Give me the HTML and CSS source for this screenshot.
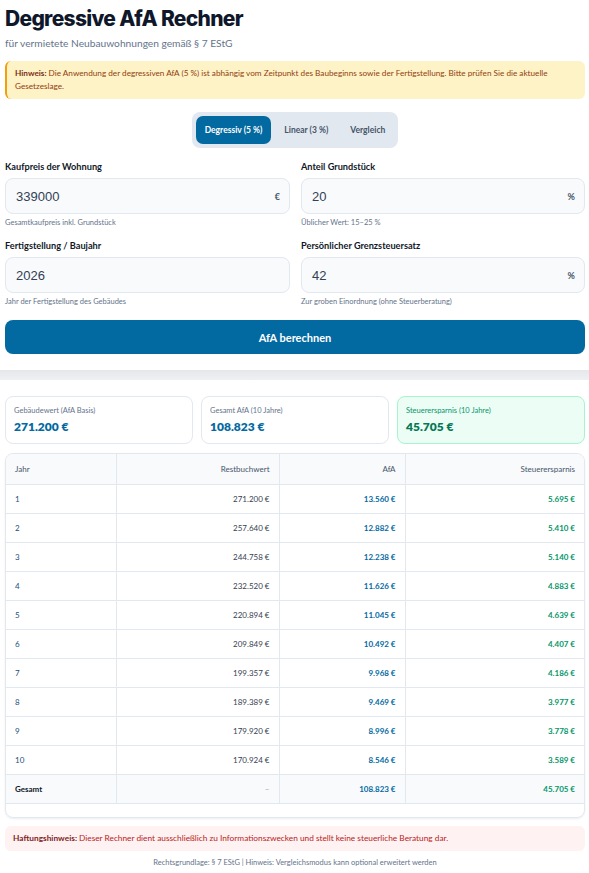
FILE: index.html
```html
<!DOCTYPE html>
<html lang="de">
<head>
<meta charset="utf-8">
<title>Degressive AfA Rechner</title>
<link rel="stylesheet" href="styles.css">
</head>
<body>
<main class="page">
  <section class="top">
    <h1 class="title">Degressive AfA Rechner</h1>
    <p class="subtitle">für vermietete Neubauwohnungen gemäß § 7 EStG</p>
    <div class="notice"><strong>Hinweis: </strong><span>Die Anwendung der degressiven AfA (5 %) ist abhängig vom Zeitpunkt des Baubeginns sowie der Fertigstellung. Bitte prüfen Sie die aktuelle Gesetzeslage.</span></div>
    <div class="tabs-row">
      <div class="tabs">
        <span class="tab active">Degressiv (5 %)</span>
        <span class="tab">Linear (3 %)</span>
        <span class="tab">Vergleich</span>
      </div>
    </div>
    <div class="form">
      <div class="field">
        <div class="label">Kaufpreis der Wohnung</div>
        <div class="input"><span class="value">339000</span><span class="unit">€</span></div>
        <div class="help">Gesamtkaufpreis inkl. Grundstück</div>
      </div>
      <div class="field">
        <div class="label">Anteil Grundstück</div>
        <div class="input"><span class="value">20</span><span class="unit">%</span></div>
        <div class="help">Üblicher Wert: 15–25 %</div>
      </div>
      <div class="field">
        <div class="label">Fertigstellung / Baujahr</div>
        <div class="input"><span class="value">2026</span></div>
        <div class="help">Jahr der Fertigstellung des Gebäudes</div>
      </div>
      <div class="field">
        <div class="label">Persönlicher Grenzsteuersatz</div>
        <div class="input"><span class="value">42</span><span class="unit">%</span></div>
        <div class="help">Zur groben Einordnung (ohne Steuerberatung)</div>
      </div>
    </div>
    <button class="calc">AfA berechnen</button>
  </section>
  <div class="band"></div>
  <section class="results">
    <div class="cards">
      <div class="card"><div class="card-label">Gebäudewert (AfA Basis)</div><div class="card-value">271.200 €</div></div>
      <div class="card"><div class="card-label">Gesamt AfA (10 Jahre)</div><div class="card-value">108.823 €</div></div>
      <div class="card green"><div class="card-label">Steuerersparnis (10 Jahre)</div><div class="card-value">45.705 €</div></div>
    </div>
    <div class="table-wrap">
      <table class="tbl">
        <colgroup><col class="c1"><col class="c2"><col class="c3"><col class="c4"></colgroup>
        <thead>
          <tr><th class="l">Jahr</th><th>Restbuchwert</th><th>AfA</th><th>Steuerersparnis</th></tr>
        </thead>
        <tbody>
          <tr><td class="l year">1</td><td class="rest">271.200 €</td><td class="afa">13.560 €</td><td class="tax">5.695 €</td></tr>
          <tr><td class="l year">2</td><td class="rest">257.640 €</td><td class="afa">12.882 €</td><td class="tax">5.410 €</td></tr>
          <tr><td class="l year">3</td><td class="rest">244.758 €</td><td class="afa">12.238 €</td><td class="tax">5.140 €</td></tr>
          <tr><td class="l year">4</td><td class="rest">232.520 €</td><td class="afa">11.626 €</td><td class="tax">4.883 €</td></tr>
          <tr><td class="l year">5</td><td class="rest">220.894 €</td><td class="afa">11.045 €</td><td class="tax">4.639 €</td></tr>
          <tr><td class="l year">6</td><td class="rest">209.849 €</td><td class="afa">10.492 €</td><td class="tax">4.407 €</td></tr>
          <tr><td class="l year">7</td><td class="rest">199.357 €</td><td class="afa">9.968 €</td><td class="tax">4.186 €</td></tr>
          <tr><td class="l year">8</td><td class="rest">189.389 €</td><td class="afa">9.469 €</td><td class="tax">3.977 €</td></tr>
          <tr><td class="l year">9</td><td class="rest">179.920 €</td><td class="afa">8.996 €</td><td class="tax">3.778 €</td></tr>
          <tr><td class="l year">10</td><td class="rest">170.924 €</td><td class="afa">8.546 €</td><td class="tax">3.589 €</td></tr>
          <tr class="total"><td class="l">Gesamt</td><td class="dash">–</td><td class="afa">108.823 €</td><td class="tax">45.705 €</td></tr>
        </tbody>
      </table>
    </div>
    <div class="liability"><strong>Haftungshinweis: </strong><span>Dieser Rechner dient ausschließlich zu Informationszwecken und stellt keine steuerliche Beratung dar.</span></div>
    <p class="footer">Rechtsgrundlage: § 7 EStG | Hinweis: Vergleichsmodus kann optional erweitert werden</p>
  </section>
</main>
</body>
</html>
```
FILE: styles.css
```css
* { box-sizing: border-box; }
html, body { margin: 0; padding: 0; background: #ffffff; }
body { font-family: Lato, "Open Sans", Arial, sans-serif; color: #1e293b; }

.top { padding: 4px 4px 16px 5px; }
.title {
  margin: 0;
  font-family: Inter, "DejaVu Sans", sans-serif;
  font-weight: 800;
  font-size: 21px;
  line-height: 30px;
  letter-spacing: -0.7px;
  color: #0f172a;
}
.subtitle { margin: 1px 0 0; font-size: 10.2px; line-height: 16px; color: #64748b; }

.notice {
  margin-top: 10px;
  background: #fef3c7;
  border-left: 2px solid #f59e0b;
  border-radius: 6px;
  padding: 6px 10px 6px 8px;
  font-size: 8.2px;
  line-height: 12.5px;
  color: #92400e;
  min-height: 38px;
}
.notice strong { color: #7c2d12; font-weight: 700; }

.tabs-row { display: flex; justify-content: center; margin-top: 13px; }
.tabs {
  display: flex; gap: 4px;
  background: #e2e8f0;
  border-radius: 8px;
  padding: 4px;
}
.tab {
  display: flex; align-items: center; justify-content: center;
  height: 28px; padding: 0 9px;
  font-size: 8.5px; font-weight: 700; color: #475569;
  border-radius: 7px;
}
.tab.active { background: #0369a1; color: #ffffff; }

.form {
  margin-top: 12px;
  display: grid;
  grid-template-columns: 285px 284px;
  column-gap: 11px;
  row-gap: 10px;
}
.label { font-size: 9.2px; font-weight: 700; line-height: 14px; color: #111827; margin-bottom: 4px; }
.input {
  height: 36px;
  display: flex; align-items: center; justify-content: space-between;
  padding: 0 9px 0 10px;
  background: #f8fafc;
  border: 1px solid #e2e8f0;
  border-radius: 8px;
}
.value { font-family: "Liberation Sans", Arial, sans-serif; font-size: 13px; color: #334155; }
.unit { font-size: 9px; font-weight: 700; color: #475569; }
.help { margin-top: 3px; font-size: 7.5px; line-height: 12px; color: #64748b; }

.calc {
  display: block; width: 100%;
  margin-top: 12px;
  height: 34px;
  border: 0; border-radius: 8px;
  background: #0369a1;
  color: #ffffff;
  font-family: Lato, "Open Sans", sans-serif;
  font-size: 11px; font-weight: 700;
}

.band { height: 10px; background: linear-gradient(#e5e7eb, #eef0f3); }

.results { padding: 16px 4px 8px 5px; }
.cards { display: grid; grid-template-columns: repeat(3, 1fr); gap: 8px; }
.card {
  height: 48px;
  border: 1px solid #e2e8f0;
  border-radius: 8px;
  padding: 9px 8px 0;
  background: #ffffff;
}
.card-label { font-size: 7.5px; line-height: 10px; color: #64748b; }
.card-value { margin-top: 3px; font-size: 12px; font-weight: 800; line-height: 16px; color: #0369a1; }
.card.green { background: #ecfdf5; border-color: #a7f3d0; }
.card.green .card-label { color: #059669; }
.card.green .card-value { color: #047857; }

.table-wrap {
  margin-top: 9px;
  border: 1px solid #e2e8f0;
  border-radius: 8px;
  box-shadow: 0 1px 2px rgba(15, 23, 42, 0.08);
  padding-bottom: 13px;
  overflow: hidden;
}
.tbl { width: 100%; border-collapse: collapse; font-size: 8px; }
.c1 { width: 110px; } .c2 { width: 163px; } .c3 { width: 126px; } .c4 { width: auto; }
.tbl th, .tbl td {
  text-align: right;
  padding: 0 9px;
  border-right: 1px solid #e2e8f0;
  border-bottom: 1px solid #e2e8f0;
}
.tbl th:last-child, .tbl td:last-child { border-right: 0; }
.tbl th { height: 30px; background: #f8fafc; font-weight: 400; color: #475569; }
.tbl td { height: 29px; color: #374151; }
.tbl .l { text-align: left; }
.tbl .year { color: #1e4e79; }
.tbl .afa { color: #0369a1; font-weight: 700; }
.tbl .tax { color: #059669; font-weight: 700; }
.tbl .dash { color: #94a3b8; }
.tbl .total td { background: #f8fafc; }
.tbl .total .l { font-weight: 700; color: #111827; }

.liability {
  margin-top: 8px;
  background: #fef2f2;
  border-radius: 6px;
  padding: 7px 8px;
  font-size: 8.3px; line-height: 11px;
  color: #b91c1c;
}
.liability strong { color: #7f1d1d; }
.footer { margin: 7px 0 0; text-align: center; font-size: 7.5px; line-height: 10px; color: #64748b; }
```
